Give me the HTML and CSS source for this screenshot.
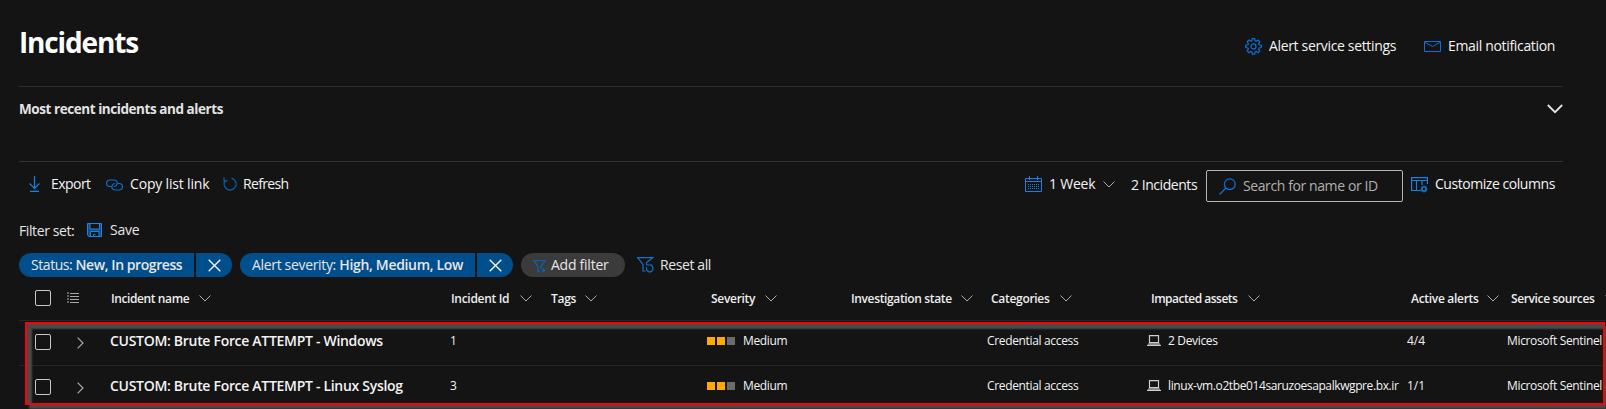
FILE: index.html
```
<!DOCTYPE html>
<html lang="en">
<head>
<meta charset="utf-8">
<title>Incidents</title>
<link rel="stylesheet" href="styles.css">
</head>
<body>
<svg width="0" height="0" class="defs">
  <symbol id="chev" viewBox="0 0 12 7"><path d="M.5.5 6 6 11.5.5" fill="none" stroke="currentColor"/></symbol>
  <symbol id="right" viewBox="0 0 7 12"><path d="M.6.6 6 6 .6 11.4" fill="none" stroke="currentColor" stroke-width="1.2"/></symbol>
  <symbol id="x" viewBox="0 0 13 13"><path d="M.7.7l11.6 11.6M12.3.7.7 12.3" fill="none" stroke="currentColor" stroke-width="1.4"/></symbol>
  <symbol id="laptop" viewBox="0 0 14 11"><path d="M2.500 7.500V.6h9v6.900z" fill="none" stroke="currentColor" stroke-width="1.2"/><path d="M1.500 8h11L14 11H0z" fill="#8a8a8a"/><path d="M0 10.500h14" stroke="currentColor"/></symbol>
</svg>
<div class="page">
  <header class="head">
    <h1>Incidents</h1>
    <svg class="gear" viewBox="0 0 17 17" fill="none" stroke="currentColor" stroke-width="1.2"><path d="M7.300.7h2.400l.4 2.100 1.200.5 1.800-1.200 1.700 1.700-1.200 1.800.5 1.200 2.200.4v2.400l-2.200.4-.5 1.200 1.200 1.800-1.700 1.700-1.800-1.200-1.200.5-.4 2.200H7.300l-.4-2.200-1.200-.5-1.800 1.200-1.700-1.700 1.200-1.800-.5-1.200-2.200-.4V7.200l2.200-.4.5-1.200L2.200 3.800l1.700-1.700 1.800 1.200 1.200-.5z"/><circle cx="8.500" cy="8.400" r="2.500"/></svg>
    <span class="t set">Alert service settings</span>
    <svg class="mail" viewBox="0 0 17 11" fill="none" stroke="currentColor"><path d="M.5.5h16v10H.5zM.5 1l8 4.500 8-4.500"/></svg>
    <span class="t em">Email notification</span>
  </header>
  <section class="recent">
    <span class="rt">Most recent incidents and alerts</span>
    <svg class="bigchev" viewBox="0 0 16 10"><path d="M.8 1 8 8.200 15.200 1" fill="none" stroke="currentColor" stroke-width="1.800"/></svg>
  </section>
  <div class="bar">
    <svg class="dl" viewBox="0 0 11 16" fill="none" stroke="currentColor" stroke-width="1.200"><path d="M5.500 0v12M.6 7.500l4.900 4.900 4.900-4.900M1 15.400h9"/></svg>
    <span class="t ex">Export</span>
    <svg class="link" viewBox="0 0 17 12" fill="none" stroke="currentColor" stroke-width="1.200"><path d="M5 7.500H3.800A3.200 3.200 0 0 1 3.800 1H8a3.200 3.200 0 0 1 2.500 5.200Q9.800 7.500 8 7.500"/><path d="M12 4.500h1.200a3.200 3.200 0 0 1 0 6.500H9a3.200 3.200 0 0 1-2.500-5.200Q7.200 4.500 9 4.500"/></svg>
    <span class="t cp">Copy list link</span>
    <svg class="ref" viewBox="0 0 14 14" fill="none" stroke="currentColor" stroke-width="1.200"><path d="M8.500 1.200A6 6 0 1 1 2.200 3.600M1 .5v3.300h3.500"/></svg>
    <span class="t rf">Refresh</span>
    <svg class="cal" viewBox="0 0 17 16" fill="none" stroke="currentColor"><path d="M.5 2.500h16v13H.5zM.5 5.500h16M4.500 0v4M12.500 0v4"/><path d="M3 8.500h11M3 10.500h11M3 12.500h11" stroke-dasharray="1 1"/></svg>
    <span class="t wk">1 Week</span>
    <svg class="chev wc"><use href="#chev"/></svg>
    <span class="t ct">2 Incidents</span>
    <div class="search">
      <svg class="mag" viewBox="0 0 17 17" fill="none" stroke="currentColor" stroke-width="1.200"><circle cx="10.800" cy="6.200" r="5.400"/><path d="M7 10 .5 16.500"/></svg>
      <span class="t sr">Search for name or ID</span>
    </div>
    <svg class="cols" viewBox="0 0 17 16" fill="none" stroke="currentColor" stroke-width="1.200"><path d="M10 13.500H.6V.6h15.800V7M.6 3.500h15.800M5.500 3.500v10M11 3.500V8"/><circle cx="13" cy="12" r="2"/><path d="M13 8.500V10M13 14v1.500M9.500 12H11M15 12h1.500M10.500 9.500l1.100 1.100M14.400 13.400l1.100 1.100M15.500 9.500l-1.100 1.100M11.600 13.400l-1.100 1.100"/></svg>
    <span class="t cu">Customize columns</span>
  </div>
  <div class="fset">
    <span class="t fs">Filter set:</span>
    <svg class="disk" viewBox="0 0 15 14"><path d="M0 0h15v14H2L0 12z" fill="#0f4d86"/><path d="M3 .5h9.500V6H3zM4 9h8v5H4z" fill="#141414"/><path d="M.5.500h14v13H2.300L.5 12zM3 .5V6h9.500V.5M3.500 13.500v-5h8.500v5M6.500 13.500v-2h2" fill="none" stroke="#2283dc"/></svg>
    <span class="t sv">Save</span>
  </div>
  <div class="chips">
    <div class="chip c1"><span class="t p1">Status: <b>New, In progress</b></span></div>
    <div class="close"><svg class="x"><use href="#x"/></svg></div>
    <div class="chip c2"><span class="t p2">Alert severity: <b>High, Medium, Low</b></span></div>
    <div class="close"><svg class="x"><use href="#x"/></svg></div>
    <div class="add">
      <svg class="fun" viewBox="0 0 13 13" fill="none" stroke="currentColor" stroke-width="1.200"><path d="M8 9V6.500L12.300.6H.6L5 6.500v5.300l1.800-1M10.500 8v4.500M8.300 10.300h4.500"/></svg>
      <span class="t ad">Add filter</span>
    </div>
    <svg class="reset" viewBox="0 0 17 16" fill="none" stroke="currentColor" stroke-width="1.200"><path d="M9.500 5.500 15.800.6H.6L6 7.500V14h2.500M9.500 8h6M9.500 5.500V8"/><path d="M14 8.500a3.300 3.300 0 1 1-4.300 1.800"/></svg>
    <span class="t rs">Reset all</span>
  </div>
  <div class="row hrow">
    <i class="box"></i>
    <svg class="list" viewBox="0 0 12 11" fill="none" stroke="#aaa"><path d="M3 1.500h9M3 4.500h9M3 7.500h9M3 10.500h9"/><path d="M1 0v11" stroke-dasharray="2 1"/></svg>
    <span class="h name"><span class="h1">Incident name</span><svg class="chev"><use href="#chev"/></svg></span>
    <span class="h id"><span class="h2">Incident Id</span><svg class="chev"><use href="#chev"/></svg></span>
    <span class="h tags"><span class="h3">Tags</span><svg class="chev"><use href="#chev"/></svg></span>
    <span class="h sev"><span class="h4">Severity</span><svg class="chev"><use href="#chev"/></svg></span>
    <span class="h inv"><span class="h5">Investigation state</span><svg class="chev"><use href="#chev"/></svg></span>
    <span class="h wide"><span class="h6">Categories</span><svg class="chev"><use href="#chev"/></svg></span>
    <span class="h wide"><span class="h7">Impacted assets</span><svg class="chev"><use href="#chev"/></svg></span>
    <span class="h wide"><span class="h8">Active alerts</span><svg class="chev"><use href="#chev"/></svg></span>
    <span class="h wide"><span class="h9">Service sources</span><svg class="chev"><use href="#chev"/></svg></span>
  </div>
  <div class="row drow">
    <i class="box"></i><svg class="right"><use href="#right"/></svg>
    <span class="d name">CUSTOM: Brute Force ATTEMPT - Windows</span>
    <span class="d id">1</span><span></span>
    <span class="d sevd"><i class="sq on"></i><i class="sq on"></i><i class="sq"></i><span class="med">Medium</span></span><span></span>
    <span class="d c">Credential access</span>
    <span class="d c"><svg class="lap"><use href="#laptop"/></svg><span class="dev">2 Devices</span></span>
    <span class="d c act">4/4</span>
    <span class="d c">Microsoft Sentinel</span>
  </div>
  <div class="row drow last">
    <i class="box"></i><svg class="right"><use href="#right"/></svg>
    <span class="d name">CUSTOM: Brute Force ATTEMPT - Linux Syslog</span>
    <span class="d id">3</span><span></span>
    <span class="d sevd"><i class="sq on"></i><i class="sq on"></i><i class="sq"></i><span class="med">Medium</span></span><span></span>
    <span class="d c">Credential access</span>
    <span class="d c"><svg class="lap"><use href="#laptop"/></svg><span class="vm">linux-vm.o2tbe014saruzoesapalkwgpre.bx.ir</span></span>
    <span class="d c act">1/1</span>
    <span class="d c">Microsoft Sentinel</span>
  </div>
  <div class="mark"></div>
</div>
</body>
</html>
```

FILE: styles.css
```
* { box-sizing: border-box; }
body { margin: 0; background: #141414; color: #f3f3f3; font-family: "Open Sans", "Noto Sans", sans-serif; overflow: hidden; }
.defs { position: absolute; }
svg { display: block; flex: none; }
.page { position: relative; width: 1606px; height: 409px; overflow: hidden; }
.t, .h, .d, .rt, h1 { white-space: nowrap; flex: none; }
.t { font-size: 14px; line-height: 20px; }
b { font-weight: 600; }
.head { height: 86px; margin-left: 19px; display: flex; align-items: flex-start; color: #0f6fd6; }
.head .t { color: #f3f3f3; margin-top: 36px; }
h1 { margin: 23px 0 0; width: 1226px; font-size: 28px; line-height: 38px; font-weight: 700; color: #fff; letter-spacing: -1.15px; }
.gear { width: 17px; height: 17px; margin-top: 38px; }
.set { margin-left: 7px; width: 155px; letter-spacing: -.34px; }
.mail { width: 17px; height: 11px; margin-top: 41px; }
.em { margin-left: 7px; letter-spacing: -.33px; }
.recent { height: 76px; width: 1544px; margin-left: 19px; border-top: 1px solid #2b2b2b; border-bottom: 1px solid #333; display: flex; justify-content: space-between; color: #e3e3e3; }
.rt { font-size: 13.500px; font-weight: 700; line-height: 20px; margin-top: 12px; letter-spacing: -.44px; }
.bigchev { width: 16px; height: 10px; margin-top: 17px; }
.bar { height: 58px; padding: 8px 0 0 29px; display: flex; align-items: flex-start; color: #1581e5; }
.bar .t { color: #f3f3f3; margin-top: 4px; }
.dl { width: 11px; height: 16px; margin-top: 6px; }
.ex { margin-left: 11px; width: 55px; letter-spacing: -.55px; }
.link { width: 17px; height: 12px; margin-top: 9px; color: #0f6fd6; }
.cp { margin-left: 7px; width: 93px; letter-spacing: -.18px; }
.ref { width: 14px; height: 14px; margin-top: 7px; color: #0b62ad; }
.rf { margin-left: 6px; width: 782px; letter-spacing: -.65px; }
.cal { width: 17px; height: 16px; margin-top: 6px; }
.wk { margin-left: 7px; width: 54px; letter-spacing: -.22px; }
.chev { width: 12px; height: 7px; color: #aaa; }
.wc { margin-top: 11px; }
.bar .ct { margin-left: 16px; width: 75px; margin-top: 5px; letter-spacing: -.45px; }
.search { width: 197px; height: 32px; border: 1px solid #b5b5b5; border-radius: 2px; display: flex; padding: 5px 0 0 12px; }
.bar .search .t { color: #b0b0b0; margin: 0 0 0 7px; letter-spacing: -.4px; }
.mag { width: 17px; height: 17px; color: #0f6fd6; margin-top: 2px; }
.cols { width: 17px; height: 16px; margin: 7px 0 0 8px; }
.cu { margin-left: 7px; letter-spacing: -.45px; }
.fset { height: 33px; padding-left: 19px; display: flex; color: #e6e6e6; }
.fs { width: 68px; margin-top: 1px; letter-spacing: -.4px; }
.disk { width: 15px; height: 14px; margin-top: 3px; }
.sv { margin-left: 8px; letter-spacing: -.2px; }
.chips { height: 24px; padding-left: 19px; display: flex; color: #e6e6e6; }
.chip { display: flex; background: #004e8c; border-radius: 12px 0 0 12px; padding: 2px 0 0 12px; height: 24px; }
.c1 { width: 175px; letter-spacing: -.43px; }
.c2 { width: 235px; letter-spacing: -.33px; }
.close { width: 36px; margin: 0 8px 0 2px; background: #004e8c; border-radius: 0 12px 12px 0; padding: 6px 0 0 12px; }
.x { width: 13px; height: 13px; color: #f3f3f3; }
.add { width: 104px; background: #3b3b3b; border-radius: 12px; display: flex; padding: 2px 0 0 12px; }
.fun { width: 13px; height: 13px; margin-top: 5px; color: #0b62ad; }
.ad { margin-left: 5px; letter-spacing: -.25px; }
.reset { width: 17px; height: 16px; margin: 4px 0 0 12px; color: #1273cc; }
.rs { margin: 2px 0 0 6px; letter-spacing: -.4px; }
.row { margin-left: 19px; width: 1587px; display: grid; grid-template-columns: 48px 43px 340px 100px 160px 140px 136px 160px 260px 100px 1fr; border-bottom: 1px solid #262626; }
.hrow { height: 44px; }
.drow { height: 45px; }
.last { border: 0; }
.box { width: 16px; height: 16px; border: 1px solid #c8c8c8; border-radius: 2px; margin: 13px 0 0 16px; }
.list { width: 12px; height: 11px; margin: 15px 0 0 0; }
.h { display: flex; font-size: 12px; font-weight: 600; line-height: 18px; padding: 13px 0 0 1px; color: #eee; letter-spacing: -.3px; }
.h.wide { padding-left: 5px; }
.h .chev { margin-top: 5px; }
.h1 { width: 88px; letter-spacing: -.4px; } .h2 { width: 69px; } .h3 { width: 34px; } .h4 { width: 54px; } .h5 { width: 110px; letter-spacing: -.36px; } .h6 { width: 69px; } .h7 { width: 97px; letter-spacing: -.5px; } .h8 { width: 76px; } .h9 { width: 94px; letter-spacing: -.38px; }
.right { width: 7px; height: 12px; margin: 16px 0 0 10px; color: #aaa; }
.d { font-size: 12px; line-height: 18px; padding-top: 11px; display: flex; letter-spacing: -.34px; }
.d.name { font-size: 14px; font-weight: 600; letter-spacing: -.3px; }
.sevd { margin-left: -3px; }
.c { padding-left: 1px; }
.act { letter-spacing: 0; }
.sq { width: 8px; height: 8px; background: #6b6b6b; margin: 5px 2px 0 0; }
.on { background: #ffaa00; }
.med { margin-left: 6px; }
.lap { width: 14px; height: 11px; margin-top: 3px; color: #ccc; }
.dev, .vm { margin-left: 7px; }
.vm { letter-spacing: -.4px; }
.mark { position: absolute; left: 25px; top: 322px; width: 1580px; height: 83px; border: 2px solid #f00; box-shadow: inset 5px 5px 2px #4a4a4a, 4px 4px 2px #4a4a4a; }
```
